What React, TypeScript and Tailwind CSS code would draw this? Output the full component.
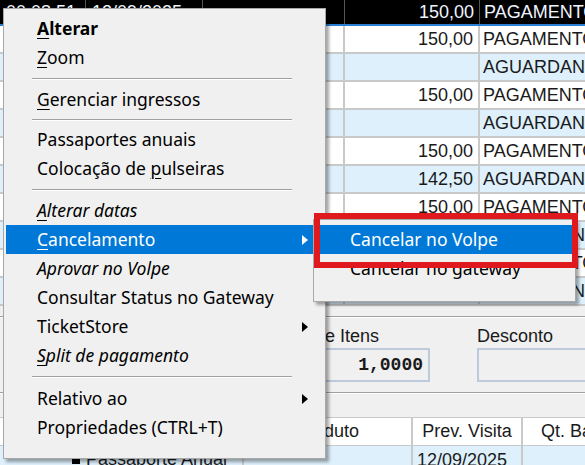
import type { ReactNode } from 'react';

type Entry =
  | { sep: true; h: number }
  | { sep?: false; label: string; key?: number; bold?: boolean; italic?: boolean; sub?: boolean; active?: boolean };

const menuEntries: Entry[] = [
  { label: 'Alterar', key: 0, bold: true },
  { label: 'Zoom', key: 0 },
  { sep: true, h: 13 },
  { label: 'Gerenciar ingressos', key: 0 },
  { sep: true, h: 11 },
  { label: 'Passaportes anuais' },
  { label: 'Colocação de pulseiras', key: 13 },
  { sep: true, h: 13 },
  { label: 'Alterar datas', key: 0, italic: true },
  { label: 'Cancelamento', key: 0, sub: true, active: true },
  { label: 'Aprovar no Volpe', italic: true },
  { label: 'Consultar Status no Gateway' },
  { label: 'TicketStore', sub: true },
  { label: 'Split de pagamento', key: 0, italic: true },
  { sep: true, h: 14 },
  { label: 'Relativo ao', sub: true },
  { label: 'Propriedades (CTRL+T)' },
];

const rows = [
  { val: '150,00', st: 'PAGAMENTO' },
  { val: '', st: 'AGUARDANDO' },
  { val: '150,00', st: 'PAGAMENTO' },
  { val: '', st: 'AGUARDANDO' },
  { val: '150,00', st: 'PAGAMENTO' },
  { val: '142,50', st: 'AGUARDANDO' },
  { val: '150,00', st: 'PAGAMENTO' },
  { val: '150,00', st: 'AGUARDANDO' },
  { val: '150,00', st: 'PAGAMENTO' },
  { val: '', st: 'AGUARDANDO' },
];

// label with the keyboard mnemonic underlined
function Mnemonic({ text, at }: { text: string; at?: number }): ReactNode {
  if (at === undefined) return <span>{text}</span>;
  return (
    <span>
      {text.slice(0, at)}
      <span className="underline decoration-1 underline-offset-[3px]">{text[at]}</span>
      {text.slice(at + 1)}
    </span>
  );
}

function SubArrow({ light }: { light?: boolean }) {
  return (
    <svg width="6" height="10" viewBox="0 0 6 10" className="absolute right-[15px] top-1/2 -translate-y-1/2">
      <path d="M0 0L6 5L0 10Z" fill={light ? '#ffffff' : '#000000'} />
    </svg>
  );
}

function MenuItem({ entry }: { entry: Exclude<Entry, { sep: true }> }) {
  return (
    <div
      className={[
        'relative flex h-[29px] items-center pl-[31px] whitespace-nowrap',
        entry.active ? 'bg-[#0078d7] text-white' : 'text-black',
        entry.bold ? 'font-bold' : '',
        entry.italic ? 'italic' : '',
      ].join(' ')}
    >
      <Mnemonic text={entry.label} at={entry.key} />
      {entry.sub && <SubArrow light={entry.active} />}
    </div>
  );
}

function Separator({ h }: { h: number }) {
  return (
    <div className="flex items-center pl-[26px]" style={{ height: h }}>
      <div className="h-[2px] w-[260px] border-t border-[#a0a0a0] border-b border-b-white" />
    </div>
  );
}

export default function App() {
  return (
    <div className="relative h-[465px] w-[585px] overflow-hidden bg-[#f0f0f0] font-['Liberation_Sans',Arial,sans-serif] text-[18px] text-[#1a1a1a]">
      {/* grade de pagamentos */}
      <div className="flex flex-col">
        <div className="grid h-[26px] grid-cols-[86px_117px_142px_135px_1fr] border-b-2 border-[#2a7fd4] bg-black leading-[24px] text-[#eef4ff]">
          <div className="border-r border-[#555] pl-[6px]">00:08:51</div>
          <div className="border-r border-[#555] pl-[6px]">12/09/2025</div>
          <div className="border-r border-[#555]" />
          <div className="border-r border-[#555] pr-[5px] text-right">150,00</div>
          <div className="pl-[4px] whitespace-nowrap">PAGAMENTO</div>
        </div>
        {rows.map((r, i) => (
          <div
            key={i}
            className={[
              'grid h-[28px] grid-cols-[86px_117px_142px_135px_1fr] border-b-2 border-[#c9c9c9] leading-[26px]',
              i % 2 === 0 ? 'bg-white' : 'bg-[#ddf0fc]',
            ].join(' ')}
          >
            <div className="border-r-2 border-[#c9c9c9]" />
            <div className="border-r-2 border-[#c9c9c9]" />
            <div className="border-r-2 border-[#c9c9c9]" />
            <div className="border-r-2 border-[#c9c9c9] pr-[5px] text-right">{r.val}</div>
            <div className="pl-[3px] whitespace-nowrap">{r.st}</div>
          </div>
        ))}
      </div>

      {/* totais */}
      <div className="mt-[10px] border-t border-[#a0a0a0]">
        <div className="flex h-[76px] items-start gap-[47px] border-t border-white border-b border-b-[#a0a0a0] pl-[296px] pt-[8px]">
          <div className="flex w-[134px] shrink-0 flex-col">
            <span className="leading-[20px]">Qtde Itens</span>
            <div className="mt-[2px] flex h-[34px] items-center justify-end border-2 border-[#bccadb] bg-[#f0f0f0] pr-[5px] font-['Liberation_Mono',monospace] font-bold">
              1,0000
            </div>
          </div>
          <div className="flex w-[140px] shrink-0 flex-col">
            <span className="leading-[20px]">Desconto</span>
            <div className="mt-[2px] h-[34px] border-2 border-[#bccadb] bg-[#f0f0f0]" />
          </div>
        </div>
        <div className="h-[24px] border-t border-white" />
      </div>

      {/* itens */}
      <div className="grid grid-cols-[244px_169px_110px_130px] border-t border-[#c9c9c9]">
        <div className="h-[27px] border-r-2 border-[#c9c9c9] bg-white" />
        <div className="h-[27px] border-r-2 border-[#c9c9c9] bg-white text-center leading-[27px]">Produto</div>
        <div className="h-[27px] border-r-2 border-[#c9c9c9] bg-white text-center leading-[27px]">Prev. Visita</div>
        <div className="h-[27px] bg-white text-center leading-[27px] whitespace-nowrap">Qt. Baixada</div>
        <div className="flex h-[28px] items-center gap-[6px] border-r-2 border-t border-[#c9c9c9] bg-[#ddf0fc] pl-[72px] whitespace-nowrap">
          <span className="h-[9px] w-[8px] bg-black" />
          <span>Passaporte Anual</span>
        </div>
        <div className="h-[28px] border-r-2 border-t border-[#c9c9c9] bg-[#ddf0fc]" />
        <div className="h-[28px] border-r-2 border-t border-[#c9c9c9] bg-[#ddf0fc] pl-[4px] leading-[28px]">12/09/2025</div>
        <div className="h-[28px] border-t border-[#c9c9c9] bg-[#ddf0fc]" />
      </div>

      {/* menu de contexto */}
      <div className="absolute left-[3px] top-[8px] h-[451px] w-[323px] border border-[#a8a8a8] bg-[#f0f0f0] px-[2px] pt-[5px] font-['Noto_Sans',sans-serif] text-[17.5px] shadow-[3px_3px_3px_rgba(0,0,0,0.35)]">
        {menuEntries.map((e, i) => (e.sep ? <Separator key={i} h={e.h} /> : <MenuItem key={i} entry={e} />))}
      </div>

      {/* submenu Cancelamento */}
      <div className="absolute left-[313px] top-[219px] h-[83px] w-[263px] border border-[#a8a8a8] bg-[#f0f0f0] px-[2px] pt-[5px] font-['Noto_Sans',sans-serif] text-[17.5px] shadow-[3px_3px_3px_rgba(0,0,0,0.35)]">
        <div className="flex h-[29px] items-center bg-[#0078d7] pl-[34px] text-white">Cancelar no Volpe</div>
        <div className="flex h-[29px] items-center pl-[34px] text-black">Cancelar no gateway</div>
      </div>

      {/* destaque */}
      <div className="absolute left-[314px] top-[213px] h-[55px] w-[264px] border-[6px] border-[#e0191f]" />
    </div>
  );
}
